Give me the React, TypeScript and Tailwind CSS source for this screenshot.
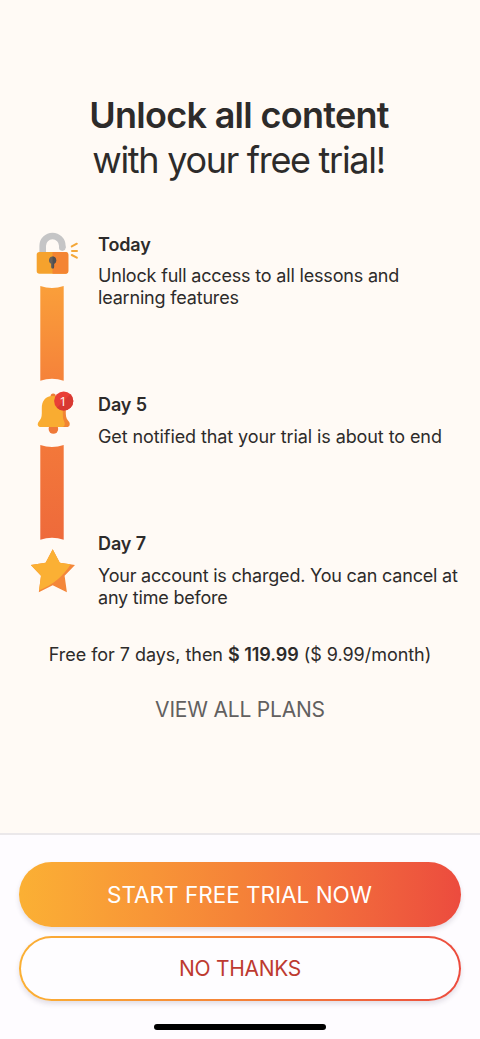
import type { ReactNode } from 'react';

interface TrialStep {
  title: string;
  lines: string[];
  className: string;
  textClassName: string;
}

const STEPS: TrialStep[] = [
  {
    title: 'Today',
    lines: ['Unlock full access to all lessons and', 'learning features'],
    className: 'h-[160px]',
    textClassName: 'mt-[6px] tracking-[-0.18px]',
  },
  {
    title: 'Day 5',
    lines: ['Get notified that your trial is about to end'],
    className: 'h-[139px]',
    textClassName: 'mt-[7px] tracking-[-0.09px]',
  },
  {
    title: 'Day 7',
    lines: ['Your account is charged. You can cancel at', 'any time before'],
    className: 'h-[85px]',
    textClassName: 'mt-[7px] tracking-[-0.2px]',
  },
];

function LockIcon() {
  return (
    <svg className="block h-[48px] w-[60px]" viewBox="0 0 60 48" fill="none">
      <path
        d="M12.7 24V15.8a9.8 9.8 0 0 1 19.6 0V17.9"
        stroke="#c5c5c6"
        strokeWidth="6.6"
      />
      <circle cx="32.3" cy="17.6" r="3.3" fill="#c5c5c6" />
      <rect x="6.7" y="22" width="31.6" height="21.8" rx="2.8" fill="#f5a22d" />
      <path d="M22.5 22h13a2.8 2.8 0 0 1 2.8 2.8V41a2.8 2.8 0 0 1-2.8 2.8h-13z" fill="#f48432" />
      <path
        d="M22.6 26.6a3.8 3.8 0 0 0-1.5 7.2v3.1a1.5 1.5 0 0 0 3 0v-3.1a3.8 3.8 0 0 0-1.5-7.2z"
        fill="#665f5a"
      />
      <path
        d="M22.6 26.6a3.8 3.8 0 0 1 1.5 7.2v3.1a1.5 1.5 0 0 1-1.5 1.5z"
        fill="#504e50"
      />
      <path
        d="M41.8 16.4l5-2.7M42 20.9h5M41.8 25l5 2.7"
        stroke="#f4a738"
        strokeWidth="2"
        strokeLinecap="round"
      />
    </svg>
  );
}

function BellIcon() {
  return (
    <svg className="block h-[48px] w-[60px]" viewBox="0 0 60 48" fill="none">
      <rect x="20.6" y="4.4" width="5.2" height="8" rx="2.6" fill="#ee7d35" />
      <circle cx="23.4" cy="40" r="4.8" fill="#ef7938" />
      <path
        d="M24 7c7.6 0 11.8 5.2 11.8 12.2v5.2c0 4.2 1.4 6.2 3 8 .9 1.1 1.1 2.3.8 3.5-.3 1.4-1.4 2.2-3 2.200H24z"
        fill="#f18433"
      />
      <path
        d="M22.2 7c7 0 10.6 5.2 10.6 12.2v5.2c0 4.4.4 6.2 1.4 8 .6 1.2.7 2.4.4 3.5-.4 1.4-1.5 2.2-3 2.200H11c-1.8 0-3-.8-3.2-2.1-.2-1.3.2-2.5 1.1-3.6 1.8-2.1 2.9-3.8 2.9-8.1v-5.100C11.8 12.2 15.4 7 22.2 7z"
        fill="#f9ac31"
      />
      <circle cx="33.7" cy="12" r="9.6" fill="#e93f36" />
      <path d="M40.500 5.200a9.600 9.600 0 0 1-13.600 13.600z" fill="#d83932" />
      <text
        x="33.2"
        y="16.6"
        textAnchor="middle"
        className="font-['Open_Sans',sans-serif] text-[13.5px] font-medium"
        fill="#fff6f2"
      >
        1
      </text>
    </svg>
  );
}

function StarIcon() {
  return (
    <svg className="block h-[48px] w-[60px]" viewBox="0 0 60 48">
      <defs>
        <clipPath id="star-shape">
          <path d="M22.7 3.2L29.8 16.8L45 19.1L34.6 29.8L36.9 46.2L22.7 39.2L8.800 46.2L11 29.8L.8 19.1L15.6 16.8z" />
        </clipPath>
      </defs>
      <g clipPath="url(#star-shape)">
        <path d="M0 0h60v48H0z" fill="#f4873a" />
        <path d="M0 0h42L40.5 18.6C34 29 23 39.6 8.6 44.6L0 48z" fill="#fbb034" />
      </g>
    </svg>
  );
}

interface ConnectorProps {
  id: string;
  from: string;
  to: string;
}

// Bar with both ends scooped out around the neighbouring icons
function Connector({ id, from, to }: ConnectorProps) {
  return (
    <svg className="ml-[10px] block h-[96px] w-[24px]" viewBox="0 0 24 96">
      <defs>
        <linearGradient id={id} x1="0" y1="0" x2="0" y2="1">
          <stop offset="0" stopColor={from} />
          <stop offset="1" stopColor={to} />
        </linearGradient>
      </defs>
      <path d="M.3 0Q12 4.2 23.7 0V94.8Q12 90.6.3 94.8z" fill={`url(#${id})`} />
    </svg>
  );
}

function Step({ title, lines, className, textClassName }: TrialStep) {
  return (
    <li className={className}>
      <h2 className="text-[18px] leading-[28px] font-semibold tracking-[-0.1px]">{title}</h2>
      <p className={`text-[18px] leading-[22px] whitespace-nowrap ${textClassName}`}>
        {lines.map((line) => (
          <span key={line} className="block">
            {line}
          </span>
        ))}
      </p>
    </li>
  );
}

function GradientPill({ children, outlined = false }: { children: ReactNode; outlined?: boolean }) {
  return (
    <button
      type="button"
      className="flex h-[65px] w-full rounded-full bg-linear-to-r from-[#fbb034] via-[#f58238] to-[#ec4b3e] p-[2px] shadow-[0_3px_5px_rgba(60,40,80,0.14)]"
    >
      <span
        className={`flex h-full w-full items-center justify-center rounded-full ${
          outlined
            ? 'bg-[#fefdff] pt-px text-[21px] tracking-[-0.3px] text-[#bd3a30]'
            : 'pr-px text-[22.5px] text-white'
        }`}
      >
        {children}
      </span>
    </button>
  );
}

export default function App() {
  return (
    <main className="flex h-[1039px] w-[480px] flex-col overflow-hidden bg-[#fffaf5] font-['Inter',sans-serif] text-[#2d2b2a]">
      <h1 className="pt-[93px] pr-[2px] text-center text-[36px] leading-[45px]">
        <span className="block font-semibold tracking-[-0.7px]">Unlock all content</span>
        <span className="block pr-px tracking-[-1.3px]">with your free trial!</span>
      </h1>

      {/* Trial timeline */}
      <section className="mt-[47px] flex h-[400px] pl-[30px]">
        <div className="flex w-[68px] shrink-0 flex-col">
          <LockIcon />
          <div className="mt-[8px]">
            <Connector id="bar-first" from="#fa9f3a" to="#f5823a" />
          </div>
          <div className="mt-[7px]">
            <BellIcon />
          </div>
          <div className="mt-[8px]">
            <Connector id="bar-second" from="#f3783a" to="#ee6a3b" />
          </div>
          <div className="mt-[5px]">
            <StarIcon />
          </div>
        </div>
        <ul className="pt-px">
          {STEPS.map((step) => (
            <Step key={step.title} {...step} />
          ))}
        </ul>
      </section>

      {/* Pricing */}
      <p className="mt-[11px] text-center text-[18px] leading-[28px] tracking-[-0.04px]">
        Free for 7 days, then <span className="font-semibold">$ 119.99</span> ($ 9.99/month)
      </p>
      <button
        type="button"
        className="mx-auto mt-[26px] text-[21px] leading-[30px] tracking-[-0.2px] text-[#62605f]"
      >
        VIEW ALL PLANS
      </button>

      {/* Bottom actions */}
      <footer className="mt-auto flex h-[206px] flex-col items-center border-t-2 border-[#ebe8ea] bg-[#fefcff] px-[19px] pt-[27px]">
        <GradientPill>START FREE TRIAL NOW</GradientPill>
        <div className="mt-[9px] w-full">
          <GradientPill outlined>NO THANKS</GradientPill>
        </div>
        <div className="mt-[23px] h-[6px] w-[172px] rounded-full bg-black" />
      </footer>
    </main>
  );
}
